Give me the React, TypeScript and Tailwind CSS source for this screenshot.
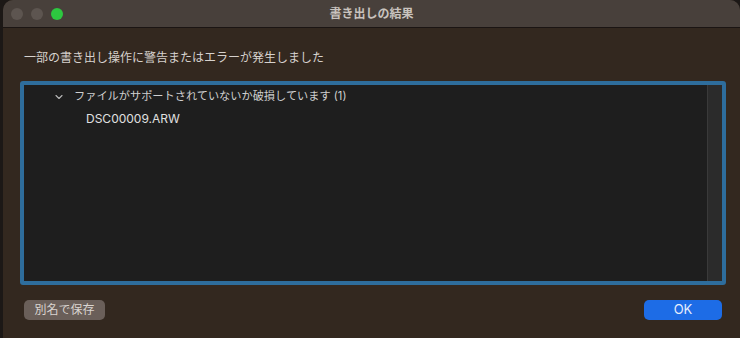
import { ChevronDown } from "lucide-react";

const font = {
  fontFamily: '"Inter", "Noto Sans CJK JP", sans-serif',
};

const TrafficLights = () => (
  <div className="absolute left-[8px] top-[8px] flex gap-[8px]">
    <span className="w-[12px] h-[12px] rounded-full bg-[#5d5550]" />
    <span className="w-[12px] h-[12px] rounded-full bg-[#5d5550]" />
    <span className="w-[12px] h-[12px] rounded-full bg-[#2dc840]" />
  </div>
);

export default function App() {
  return (
    <div className="w-[740px] h-[338px] bg-[#1c1816] overflow-hidden" style={font}>
      <div className="ml-[3px] w-[737px] h-[338px] rounded-t-[10px] bg-[#33281f] flex flex-col">
        <div className="relative h-[28px] shrink-0 rounded-t-[10px] bg-[#48403b] border-b border-[#1b1513] flex items-center justify-center">
          <TrafficLights />
          <span className="text-[12px] font-semibold text-[#c9c3be]">
            書き出しの結果
          </span>
        </div>
        <div className="flex flex-col pl-[17px] pr-[14px] pt-[22px]">
          <p className="ml-[4px] text-[12px] leading-[16px] text-[#d6d1cd]">
            一部の書き出し操作に警告またはエラーが発生しました
          </p>
          <div className="mt-[15px] h-[204px] border-[4px] border-[#2e6d9c] rounded-[3px] bg-[#1e1e1e] flex">
            <div className="flex-1 flex flex-col pt-[1px]">
              <div className="h-[21px] flex items-center">
                <ChevronDown className="ml-[29px] w-[12px] h-[12px] text-[#b8b8b8]" strokeWidth={2.25} />
                <span className="ml-[9px] text-[11.2px] text-[#cfcfcf]">
                  ファイルがサポートされていないか破損しています (1)
                </span>
              </div>
              <div className="h-[22px] mt-[1px] flex items-center pl-[62px] text-[12px] text-[#e0e0e0]">
                DSC00009.ARW
              </div>
            </div>
            <div className="w-[15px] bg-[#2b2b2b] border-l border-[#3a3a3a]" />
          </div>
          <div className="mt-[15px] px-[4px] flex items-center justify-between">
            <button className="h-[20px] w-[81px] rounded-[5px] bg-[#6a5f59] text-[12px] text-[#d9d4d0] flex items-center justify-center">
              別名で保存
            </button>
            <button className="h-[20px] w-[78px] rounded-[5px] bg-[#1d6ce6] text-[13px] text-[#e6eefc] flex items-center justify-center">
              OK
            </button>
          </div>
        </div>
      </div>
    </div>
  );
}
